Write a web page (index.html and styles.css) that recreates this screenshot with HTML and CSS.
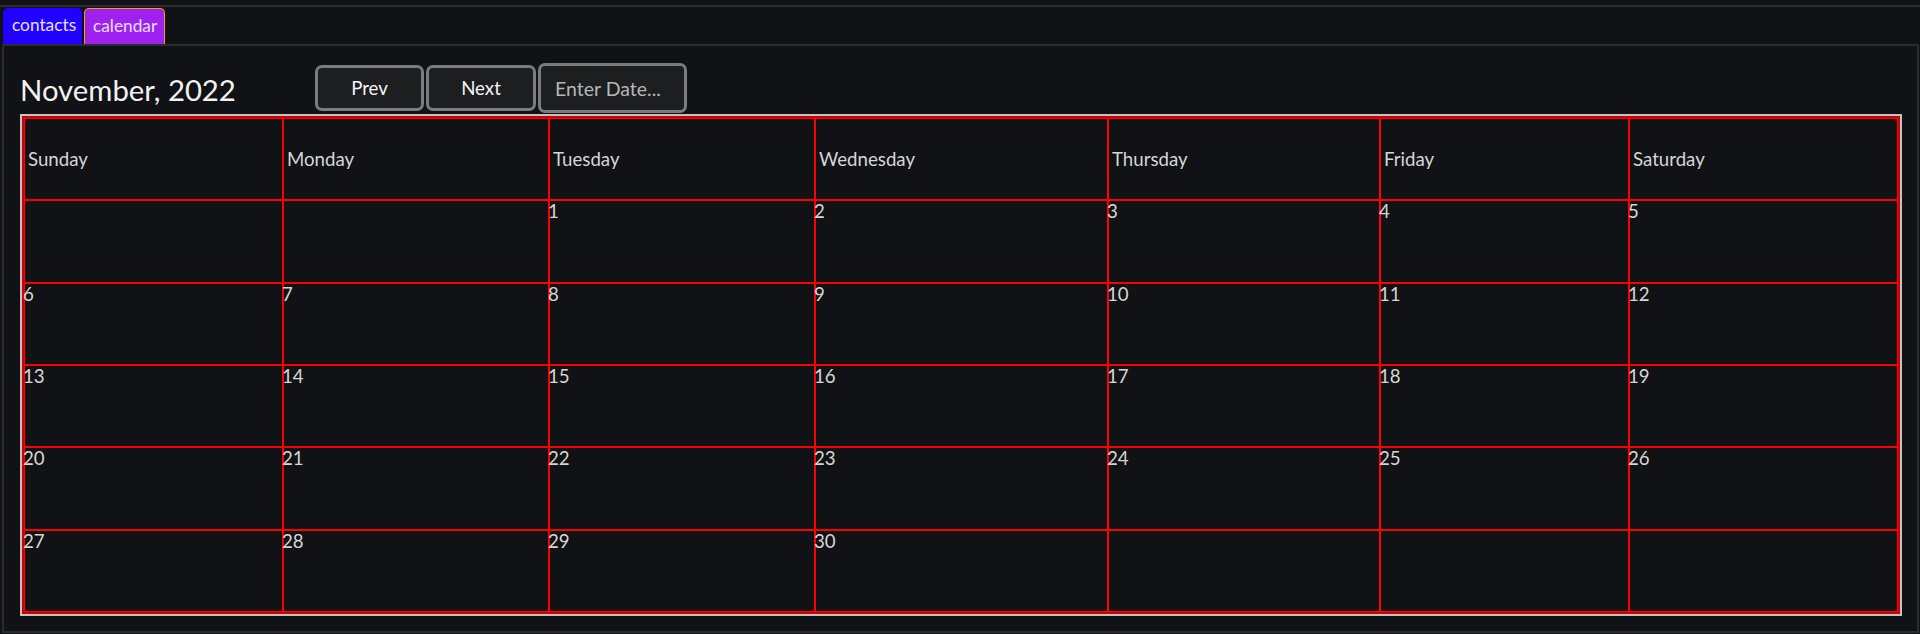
FILE: index.html
```html
<!DOCTYPE html>
<html>
<head>
<meta charset="utf-8">
<title>Calendar</title>
<link rel="stylesheet" href="styles.css">
</head>
<body>
<div class="app">
  <div class="tabbar">
    <div class="tab tab-contacts">contacts</div>
    <div class="tab tab-calendar">calendar</div>
  </div>
  <div class="panel">
    <div class="cal-header">
      <div class="cal-title">November, 2022</div>
      <div class="cal-buttons">
        <button class="btn btn-nav">Prev</button>
        <button class="btn btn-nav">Next</button>
        <button class="btn btn-date">Enter Date...</button>
      </div>
    </div>
    <div class="cal-frame">
      <table class="cal">
        <colgroup>
          <col class="c-sun"><col class="c-mon"><col class="c-tue"><col class="c-wed"><col class="c-thu"><col class="c-fri"><col class="c-sat">
        </colgroup>
        <tr>
          <th>Sunday</th><th>Monday</th><th>Tuesday</th><th>Wednesday</th><th>Thursday</th><th>Friday</th><th>Saturday</th>
        </tr>
        <tr>
          <td></td><td></td><td><span class="num">1</span></td><td><span class="num">2</span></td><td><span class="num">3</span></td><td><span class="num">4</span></td><td><span class="num">5</span></td>
        </tr>
        <tr>
          <td><span class="num">6</span></td><td><span class="num">7</span></td><td><span class="num">8</span></td><td><span class="num">9</span></td><td><span class="num">10</span></td><td><span class="num">11</span></td><td><span class="num">12</span></td>
        </tr>
        <tr>
          <td><span class="num">13</span></td><td><span class="num">14</span></td><td><span class="num">15</span></td><td><span class="num">16</span></td><td><span class="num">17</span></td><td><span class="num">18</span></td><td><span class="num">19</span></td>
        </tr>
        <tr>
          <td><span class="num">20</span></td><td><span class="num">21</span></td><td><span class="num">22</span></td><td><span class="num">23</span></td><td><span class="num">24</span></td><td><span class="num">25</span></td><td><span class="num">26</span></td>
        </tr>
        <tr>
          <td><span class="num">27</span></td><td><span class="num">28</span></td><td><span class="num">29</span></td><td><span class="num">30</span></td><td></td><td></td><td></td>
        </tr>
      </table>
    </div>
  </div>
</div>
</body>
</html>
```
FILE: styles.css
```css
html, body {
  margin: 0;
  padding: 0;
  background: #111215;
  height: 634px;
  overflow: hidden;
  font-family: Lato, "Open Sans", "Noto Sans", sans-serif;
  color: #d6d6d6;
}

.app {
  padding-top: 5px;
}

.tabbar {
  border-top: 2px solid #2b2c2e;
  height: 37px;
  display: flex;
  align-items: flex-end;
  gap: 2px;
  padding-left: 3px;
}

.tab {
  box-sizing: border-box;
  height: 36px;
  padding: 0 9px;
  display: flex;
  align-items: center;
  padding-bottom: 3px;
  font-size: 17.3px;
  border-radius: 5px 5px 0 0;
  color: #e4e0ff;
}

.tab-contacts {
  width: 79px;
  background: #2200ff;
}

.tab-calendar {
  width: 81px;
  background: #a020f0;
  border: 1px solid #f3a010;
  border-bottom: none;
  padding-left: 8px;
}

.panel {
  box-sizing: border-box;
  height: 589px;
  margin-left: 2px;
  margin-right: 1px;
  border: 2px solid #2b2c2e;
  padding: 0 15px 15px 16px;
}

.cal-header {
  display: flex;
  align-items: center;
  height: 50px;
  margin-top: 17px;
  margin-bottom: 1px;
}

.cal-title {
  flex: none;
  width: 295px;
  font-size: 29.3px;
  color: #f2f2f2;
  padding-top: 3px;
  white-space: nowrap;
}

.cal-buttons {
  display: flex;
  align-items: center;
  gap: 2px;
}

.btn {
  box-sizing: border-box;
  font-family: inherit;
  font-size: 18.67px;
  background: #1d1e20;
  border: 3px solid #7c7c7c;
  border-radius: 7px;
  padding: 0;
  margin: 0;
}

.btn-nav {
  width: 109px;
  height: 46px;
  color: #f4f4f4;
}

.btn-nav + .btn-nav {
  width: 110px;
}

.btn-date {
  width: 149px;
  height: 50px;
  text-align: left;
  padding-left: 14px;
  font-size: 19.5px;
  color: #b6b6b6;
}

.cal-frame {
  border: 2px solid #c3c3c3;
}

.cal {
  width: 100%;
  table-layout: fixed;
  border-collapse: separate;
  border-spacing: 0;
  border: 2px solid #d00000;
  font-size: 18.67px;
}

.cal tr {
  height: 82.33px;
}

.c-sun { width: 259px; }
.c-mon { width: 266px; }
.c-tue { width: 266px; }
.c-wed { width: 293px; }
.c-thu { width: 272px; }
.c-fri { width: 249px; }
.c-sat { width: 269px; }

.cal th {
  border: 1px solid #ff0000;
  font-weight: normal;
  text-align: left;
  vertical-align: middle;
  padding: 0 3px;
  color: #d6d6d6;
}

.cal td {
  border: 1px solid #ff0000;
  vertical-align: top;
  padding: 0;
}

.num {
  display: block;
  margin: -1px 0 0 -2px;
  color: #d6d6d6;
}
```
